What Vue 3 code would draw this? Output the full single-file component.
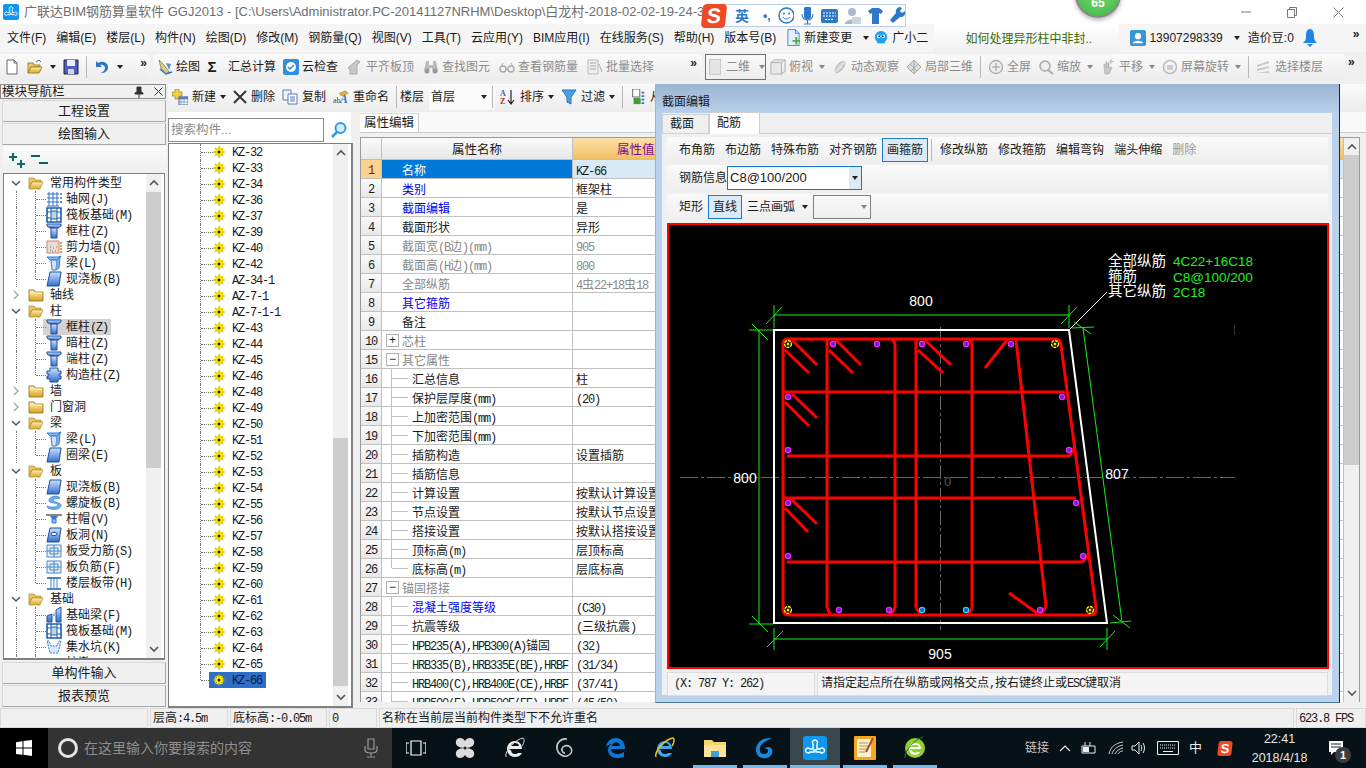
<script setup>
import { h } from 'vue';

// ascii goes in a squeezed mono so it keeps the half-width look of the original font
const Tx = (props) =>
  (props.s || '')
    .split(/([\x00-\x7f]+)/)
    .filter(Boolean)
    .map((p) => (/^[\x00-\x7f]/.test(p) ? h('span', { class: 'lat' }, p) : p));
Tx.props = ['s'];

const menus = ['文件(F)', '编辑(E)', '楼层(L)', '构件(N)', '绘图(D)', '修改(M)', '钢筋量(Q)', '视图(V)', '工具(T)', '云应用(Y)', 'BIM应用(I)', '在线服务(S)', '帮助(H)', '版本号(B)'];

const tools1 = [
  { ic: 'i-draw', t: '绘图' },
  { ic: 'i-sum', t: '汇总计算' },
  { ic: 'i-cloud', t: '云检查' },
  { ic: 'i-align', t: '平齐板顶', off: true },
  { ic: 'i-bino', t: '查找图元', off: true },
  { ic: 'i-glass', t: '查看钢筋量', off: true },
  { ic: 'i-batch', t: '批量选择', off: true },
];

const tools2 = [
  { ic: 'i-box', t: '俯视', arrow: true },
  { ic: 'i-orbit', t: '动态观察' },
  { ic: 'i-cube', t: '局部三维', sep: true },
  { ic: 'i-full', t: '全屏' },
  { ic: 'i-zoom', t: '缩放', arrow: true },
  { ic: 'i-hand', t: '平移', arrow: true },
  { ic: 'i-rot', t: '屏幕旋转', arrow: true, sep: true },
  { ic: 'i-floor', t: '选择楼层' },
];

const tree = [
  { t: '常用构件类型', open: true },
  { t: '轴网(J)', ic: 'n-grid' },
  { t: '筏板基础(M)', ic: 'n-raft' },
  { t: '框柱(Z)', ic: 'n-col' },
  { t: '剪力墙(Q)', ic: 'n-wall' },
  { t: '梁(L)', ic: 'n-beam' },
  { t: '现浇板(B)', ic: 'n-slab', last: true },
  { t: '轴线' },
  { t: '柱', open: true },
  { t: '框柱(Z)', ic: 'n-col', sel: true },
  { t: '暗柱(Z)', ic: 'n-col' },
  { t: '端柱(Z)', ic: 'n-col' },
  { t: '构造柱(Z)', ic: 'n-gz', last: true },
  { t: '墙' },
  { t: '门窗洞' },
  { t: '梁', open: true },
  { t: '梁(L)', ic: 'n-beam' },
  { t: '圈梁(E)', ic: 'n-slab', last: true },
  { t: '板', open: true },
  { t: '现浇板(B)', ic: 'n-slab' },
  { t: '螺旋板(B)', ic: 'n-spiral' },
  { t: '柱帽(V)', ic: 'n-cap' },
  { t: '板洞(N)', ic: 'n-hole' },
  { t: '板受力筋(S)', ic: 'n-force' },
  { t: '板负筋(F)', ic: 'n-force' },
  { t: '楼层板带(H)', ic: 'n-band', last: true },
  { t: '基础', open: true },
  { t: '基础梁(F)', ic: 'n-fbeam' },
  { t: '筏板基础(M)', ic: 'n-raft' },
  { t: '集水坑(K)', ic: 'n-pit' },
  { t: '柱墩(Y)', ic: 'n-cap' },
];
tree.forEach((r) => { r.child = !!r.ic; });

const parts = ['KZ-32', 'KZ-33', 'KZ-34', 'KZ-36', 'KZ-37', 'KZ-39', 'KZ-40', 'KZ-42', 'AZ-34-1', 'AZ-7-1', 'AZ-7-1-1', 'KZ-43', 'KZ-44', 'KZ-45', 'KZ-46', 'KZ-48', 'KZ-49', 'KZ-50', 'KZ-51', 'KZ-52', 'KZ-53', 'KZ-54', 'KZ-55', 'KZ-56', 'KZ-57', 'KZ-58', 'KZ-59', 'KZ-60', 'KZ-61', 'KZ-62', 'KZ-63', 'KZ-64', 'KZ-65', 'KZ-66'];

// kind: b blue, g grey; sub = nested under a group, box = + or - group head
const props = [
  { n: 1, name: '名称', val: 'KZ-66', sel: true },
  { n: 2, name: '类别', val: '框架柱', kind: 'b' },
  { n: 3, name: '截面编辑', val: '是', kind: 'b' },
  { n: 4, name: '截面形状', val: '异形' },
  { n: 5, name: '截面宽(B边)(mm)', val: '905', kind: 'g', vg: true },
  { n: 6, name: '截面高(H边)(mm)', val: '800', kind: 'g', vg: true },
  { n: 7, name: '全部纵筋', val: '4虫22+18虫18', kind: 'g', vg: true },
  { n: 8, name: '其它箍筋', val: '', kind: 'b' },
  { n: 9, name: '备注', val: '' },
  { n: 10, name: '芯柱', val: '', kind: 'g', box: '+' },
  { n: 15, name: '其它属性', val: '', kind: 'g', box: '−' },
  { n: 16, name: '汇总信息', val: '柱', sub: true },
  { n: 17, name: '保护层厚度(mm)', val: '(20)', sub: true },
  { n: 18, name: '上加密范围(mm)', val: '', sub: true },
  { n: 19, name: '下加密范围(mm)', val: '', sub: true },
  { n: 20, name: '插筋构造', val: '设置插筋', sub: true },
  { n: 21, name: '插筋信息', val: '', sub: true },
  { n: 22, name: '计算设置', val: '按默认计算设置', sub: true },
  { n: 23, name: '节点设置', val: '按默认节点设置', sub: true },
  { n: 24, name: '搭接设置', val: '按默认搭接设置', sub: true },
  { n: 25, name: '顶标高(m)', val: '层顶标高', sub: true },
  { n: 26, name: '底标高(m)', val: '层底标高', sub: true, end: true },
  { n: 27, name: '锚固搭接', val: '', kind: 'g', box: '−' },
  { n: 28, name: '混凝土强度等级', val: '(C30)', kind: 'b', sub: true },
  { n: 29, name: '抗震等级', val: '(三级抗震)', sub: true },
  { n: 30, name: 'HPB235(A),HPB300(A)锚固', val: '(32)', sub: true },
  { n: 31, name: 'HRB335(B),HRB335E(BE),HRBF', val: '(31/34)', sub: true },
  { n: 32, name: 'HRB400(C),HRB400E(CE),HRBF', val: '(37/41)', sub: true },
  { n: 33, name: 'HRB500(E),HRB500E(EE),HRBF', val: '(45/50)', sub: true },
];

const barTools = ['布角筋', '布边筋', '特殊布筋', '对齐钢筋'];
const barEdit = ['修改纵筋', '修改箍筋', '编辑弯钩', '端头伸缩'];

// section drawing, in screen coordinates
const greens = [
  [774, 315, 1069, 315], [774, 305, 774, 328], [1069, 305, 1069, 328], [766, 324, 782, 307], [1061, 324, 1077, 307],
  [759, 330, 759, 624], [749, 330, 773, 330], [749, 624, 773, 624], [752, 324, 768, 340], [752, 616, 768, 632],
  [774, 639, 1107, 639], [774, 628, 774, 650], [1107, 628, 1107, 650], [767, 647, 783, 631], [1100, 647, 1115, 631],
  [1083, 328, 1122, 622], [1072, 328, 1094, 327], [1074, 322, 1091, 334], [1110, 623, 1131, 621], [1113, 615, 1130, 628],
];
const reds = [
  [827, 339, 827, 608], [827, 608, 831, 615],
  [895, 343, 895, 608], [892, 339, 895, 343], [895, 608, 890, 615],
  [916, 339, 916, 608], [916, 608, 921, 615],
  [972, 343, 972, 608], [969, 339, 972, 343], [972, 608, 968, 615],
  [1016, 340, 1046, 606], [1046, 606, 1041, 615],
  [783, 392, 1065, 392],
  [787, 456, 1070, 456], [1070, 456, 1074, 448],
  [783, 498, 1076, 498],
  [787, 562, 1083, 562], [1083, 562, 1089, 553],
  [785, 350, 809, 373], [792, 340, 817, 365],
  [829, 350, 853, 373], [836, 340, 861, 365],
  [918, 350, 943, 373], [925, 340, 951, 365],
  [1007, 340, 985, 368],
  [785, 402, 809, 426], [792, 394, 817, 418],
  [785, 508, 808, 532], [790, 498, 817, 524],
  [1009, 593, 1037, 613],
];
const yellows = [[788, 344], [1055, 344], [788, 610], [1090, 610]];
const pinks = [[833, 344], [877, 344], [922, 344], [966, 344], [1011, 344], [788, 397], [1062, 397], [788, 450], [1069, 450], [788, 503], [1076, 503], [788, 556], [1083, 556], [839, 610], [889, 610], [1040, 610]];
const cyans = [[922, 610], [966, 610]];

const taskApps = [
  { ic: 't-fan' }, { ic: 't-ie1' }, { ic: 't-swirl' }, { ic: 't-edge' }, { ic: 't-ie' },
  { ic: 't-folder', run: true }, { ic: 't-g', run: true }, { ic: 't-app', run: true, active: true },
  { ic: 't-note', run: true }, { ic: 't-green', run: true },
];
</script>

<template>
  <div class="app">
    <svg class="defs" width="0" height="0">
      <defs>
        <linearGradient id="gFold" x1="0" y1="0" x2="0" y2="1"><stop offset="0" stop-color="#fff0b0" /><stop offset="1" stop-color="#d9a520" /></linearGradient>
        <linearGradient id="gBlue" x1="0" y1="0" x2="0" y2="1"><stop offset="0" stop-color="#cfe3fb" /><stop offset="1" stop-color="#2f6fd0" /></linearGradient>
        <symbol id="f-open" viewBox="0 0 16 16"><path d="M1 3h5l1 2h6v2H4L1 13z" fill="#e8c868" stroke="#a8842c" stroke-width=".7" /><path d="M4 7h11l-3 7H1z" fill="url(#gFold)" stroke="#b08a2c" stroke-width=".7" /></symbol>
        <symbol id="f-shut" viewBox="0 0 16 16"><path d="M1 3h5l1 2h8v9H1z" fill="url(#gFold)" stroke="#8a6d1f" stroke-width=".8" /><path d="M2 6h12" stroke="#fff6cc" /></symbol>
        <symbol id="n-grid" viewBox="0 0 16 16"><path d="M1 3h12M1 7h12M1 11h12M1 15h12M3 1v14M7 1v14M11 1v14" stroke="#2f6fd0" fill="none" /><circle cx="15" cy="3" r="1" fill="#2f6fd0" /><circle cx="15" cy="7" r="1" fill="#2f6fd0" /><circle cx="15" cy="11" r="1" fill="#2f6fd0" /></symbol>
        <symbol id="n-raft" viewBox="0 0 16 16"><path d="M1 1h14v14H1z" fill="#fff" stroke="#1d5aa8" stroke-width="1.6" /><path d="M5 4h6v8H5z" fill="#bcd4ee" stroke="#1d5aa8" /><path d="M1 5h4M1 11h4M11 5h4M11 11h4M5 1v3M11 1v3M5 12v3M11 12v3" stroke="#1d5aa8" /></symbol>
        <symbol id="n-col" viewBox="0 0 16 16"><path d="M1 1h14v2l-3 2H4L1 3z" fill="url(#gBlue)" stroke="#1d4fa0" /><path d="M5 5h6v10H5z" fill="url(#gBlue)" stroke="#1d4fa0" /></symbol>
        <symbol id="n-wall" viewBox="0 0 16 16"><path d="M1 2h12v12H1z" fill="#eadad2" stroke="#c48a70" /><path d="M4 11h1M7 9h1M9 12h1M6 12h1M10 8h1M4 8h1" stroke="#777" /><path d="M15 3v11" stroke="#e27a1d" stroke-dasharray="2 1" stroke-width="1.5" /></symbol>
        <symbol id="n-beam" viewBox="0 0 16 16"><path d="M1 2h11l3-1-3 4H4z" fill="#8fbdf0" stroke="#2f7ad0" /><path d="M5 5h6l-1 10H6z" fill="#cfe3fb" stroke="#2f7ad0" /><path d="M11 5l3-3-1 11-3 2" fill="#7fb0ea" stroke="#2f7ad0" /></symbol>
        <symbol id="n-slab" viewBox="0 0 16 16"><path d="M4 1h11l-2 14H1z" fill="url(#gBlue)" stroke="#1d4fa0" /></symbol>
        <symbol id="n-gz" viewBox="0 0 16 16"><path d="M4 1h8v3h3v3h-2v2h2v3h-3v3H4v-3H1V9h2V7H1V4h3z" fill="url(#gBlue)" stroke="#1d4fa0" /></symbol>
        <symbol id="n-spiral" viewBox="0 0 16 16"><path d="M14 3C11-1 2 2 3 6c1 3 9 1 9 4 0 2-8 3-11 1 0 4 12 5 14 0 1-4-8-3-8-6 1-2 5-1 7-2z" fill="#6fb0ec" stroke="#2f7ad0" stroke-width=".7" /></symbol>
        <symbol id="n-cap" viewBox="0 0 16 16"><path d="M0 3h16v2H0z" fill="#888" /><path d="M4 5h8l-2 3H6z" fill="#3a7ad0" /><path d="M6 8h4v4H6z" fill="#8fbdf0" stroke="#2f7ad0" /></symbol>
        <symbol id="n-hole" viewBox="0 0 16 16"><path d="M4 1h11l-2 14H1z" fill="url(#gBlue)" stroke="#1d4fa0" /><ellipse cx="8" cy="7" rx="3" ry="1.6" fill="#fff" stroke="#1d4fa0" /></symbol>
        <symbol id="n-force" viewBox="0 0 16 16"><path d="M1 2h14v12H1z" fill="#e4eefa" stroke="#4a86c8" /><path d="M1 8h14M8 2v12" stroke="#4a86c8" /><path d="M4 5h8v6H4z" fill="none" stroke="#4a86c8" /></symbol>
        <symbol id="n-band" viewBox="0 0 16 16"><path d="M1 3h14M1 14h14" stroke="#1d5aa8" stroke-width="1.4" /><path d="M5 3v11M11 3v11M8 3v11" stroke="#4a86c8" /></symbol>
        <symbol id="n-fbeam" viewBox="0 0 16 16"><path d="M1 15V9l5-2v8zM10 15V3l5-3v15z" fill="url(#gBlue)" stroke="#1d4fa0" /><path d="M6 8l4-4v5H6z" fill="#8fbdf0" /></symbol>
        <symbol id="n-pit" viewBox="0 0 16 16"><path d="M1 2h2l2 5h6l2-5h2l-3 12H4z" fill="#dbe9fa" stroke="#2f7ad0" stroke-dasharray="2 1" /></symbol>
        <symbol id="n-gear" viewBox="0 0 12 12"><circle cx="6" cy="6" r="4.6" fill="#ffee00" /><path d="M6 0v12M0 6h12M1.8 1.8l8.4 8.4M10.2 1.8l-8.4 8.4" stroke="#b9a000" /><circle cx="6" cy="6" r="3" fill="#ffee00" /><circle cx="6" cy="6" r="1.5" fill="#222" /></symbol>
        <symbol id="i-new" viewBox="0 0 16 16"><path d="M3 1h7l3 3v11H3z" fill="#fff" stroke="#667" /><path d="M10 1v3h3" fill="none" stroke="#667" /></symbol>
        <symbol id="i-open" viewBox="0 0 16 16"><path d="M1 4h5l1 2h6v2H4L1 14z" fill="#e8c868" stroke="#a8842c" /><path d="M4 8h11l-3 6H1z" fill="url(#gFold)" stroke="#a8842c" /><path d="M9 3l3-2 2 2" fill="none" stroke="#2f6fd0" /></symbol>
        <symbol id="i-save" viewBox="0 0 16 16"><path d="M1 1h14v14H1z" fill="#4a5ec0" stroke="#223" /><path d="M4 1h8v6H4z" fill="#e8eef8" /><path d="M5 10h6v5H5z" fill="#cfd8e8" /></symbol>
        <symbol id="i-undo" viewBox="0 0 16 16"><path d="M2 2v6h6L6 6c3-1 5 1 5 3s-2 4-4 5c4 0 7-2 7-6S9 1 4 4z" fill="#2f73c8" /></symbol>
        <symbol id="i-draw" viewBox="0 0 16 16"><path d="M2 1l5 5 5 7-3 2-5-6z" fill="#e8d070" stroke="#666" stroke-width=".7" /><path d="M9 4l5 1-2 6" fill="#5a8fd8" /><path d="M3 10l6 5 6-2" stroke="#2f6fd0" fill="none" stroke-width="1.4" /></symbol>
        <symbol id="i-cloud" viewBox="0 0 16 16"><rect x="0" y="0" width="16" height="16" rx="2" fill="#2f8fdc" /><circle cx="8" cy="8" r="5" fill="#fff" /><path d="M5 8l2 2 4-4" fill="none" stroke="#2f8fdc" stroke-width="1.5" /></symbol>
        <symbol id="i-align" viewBox="0 0 16 16"><path d="M1 9l9-8 3 2-3 3v9H3V10z" fill="#c8c8c8" stroke="#aaa" /></symbol>
        <symbol id="i-bino" viewBox="0 0 16 16"><path d="M3 2h3v4h4V2h3l2 10h-5l-1-3H7l-1 3H1z" fill="#bbb" /><circle cx="4" cy="12" r="2.5" fill="#999" /><circle cx="12" cy="12" r="2.5" fill="#999" /></symbol>
        <symbol id="i-glass" viewBox="0 0 16 16"><circle cx="4" cy="10" r="3" fill="none" stroke="#aaa" stroke-width="1.4" /><circle cx="12" cy="10" r="3" fill="none" stroke="#aaa" stroke-width="1.4" /><path d="M7 10h2M2 8l2-4M14 8l-2-4" stroke="#aaa" /></symbol>
        <symbol id="i-batch" viewBox="0 0 16 16"><path d="M1 1h10v14H1z" fill="#eee" stroke="#bbb" /><path d="M3 4h6M3 7h6M3 10h6M12 5l3 8" stroke="#aaa" /></symbol>
        <symbol id="i-box" viewBox="0 0 18 18"><path d="M1 4h12v13H1zM1 4l4-3h12l-4 3M13 17l4-3V1" fill="#e8e8e8" stroke="#aaa" /></symbol>
        <symbol id="i-orbit" viewBox="0 0 16 16"><ellipse cx="8" cy="8" rx="3.5" ry="7.5" transform="rotate(40 8 8)" fill="#bbb" /><ellipse cx="8" cy="8" rx="2" ry="7.5" transform="rotate(40 8 8)" fill="#ddd" /></symbol>
        <symbol id="i-cube" viewBox="0 0 16 16"><path d="M1 8l7-7 7 7-7 7z" fill="#ddd" stroke="#aaa" /><path d="M4 5l7 7M8 1v14M12 5l-7 7" stroke="#aaa" /></symbol>
        <symbol id="i-full" viewBox="0 0 16 16"><circle cx="8" cy="8" r="6.5" fill="#eee" stroke="#aaa" stroke-width="1.3" /><path d="M8 4v8M4 8h8" stroke="#999" /></symbol>
        <symbol id="i-zoom" viewBox="0 0 16 16"><circle cx="7" cy="7" r="5" fill="#eee" stroke="#aaa" stroke-width="1.6" /><path d="M10 11l5 4" stroke="#aaa" stroke-width="2" /></symbol>
        <symbol id="i-hand" viewBox="0 0 16 16"><path d="M4 8V5h1v3h1V3h1v5h1V4h1v5l2-1 1 1-3 6H5z" fill="#c8c8c8" stroke="#aaa" stroke-width=".6" /><path d="M11 0v5M9 2.500h5" stroke="#bbb" /></symbol>
        <symbol id="i-rot" viewBox="0 0 16 16"><circle cx="8" cy="8" r="6.500" fill="#f4f4f4" stroke="#bbb" stroke-width="1.500" /><path d="M5 6h6v5H5z" fill="#ccc" /></symbol>
        <symbol id="i-floor" viewBox="0 0 16 16"><path d="M1 6l12-4v2L1 8zM1 10l12-3v2L1 12zM1 14l12-2v2H1z" fill="#c8c8c8" /></symbol>
        <symbol id="i-add" viewBox="0 0 16 16"><path d="M3 0h4v3h3v4H7v3H3V7H0V3h3z" fill="#f0d050" stroke="#a08020" stroke-width=".7" /><path d="M7 8h9v8H7z" fill="#fff" stroke="#4a70b0" /><path d="M7 8h9v2H7zM9 10v6M12 10v6M7 13h9" fill="#5a88c8" stroke="#4a70b0" stroke-width=".6" /></symbol>
        <symbol id="i-copy" viewBox="0 0 16 16"><path d="M1 1h8v10H1z" fill="#eef3fa" stroke="#5a7fb0" /><path d="M6 5h9v10H6z" fill="#fff" stroke="#5a7fb0" /><path d="M8 8h5M8 10h5M8 12h5" stroke="#5a7fb0" /></symbol>
        <symbol id="i-rename" viewBox="0 0 18 16"><path d="M7 4l7-3 3 3-7 3z" fill="#e8b040" stroke="#8a6d1f" stroke-width=".6" /><text x="0" y="15" font-size="9" font-family="Liberation Serif" fill="#444">ab</text><text x="8" y="15" font-size="13" font-weight="700" font-style="italic" font-family="Liberation Serif" fill="#2f6fd0">A</text></symbol>
        <symbol id="i-sort" viewBox="0 0 16 16"><text x="0" y="7" font-size="8" font-weight="700" font-family="Liberation Serif" fill="#2f5fc0">A</text><text x="0" y="15" font-size="8" font-weight="700" font-family="Liberation Serif" fill="#c02828">Z</text><path d="M11 1v13M8 11l3 4 3-4" fill="none" stroke="#222" stroke-width="1.2" /></symbol>
        <symbol id="i-filter" viewBox="0 0 16 16"><path d="M1 1h14L10 8v7l-4-2V8z" fill="#4aa0e8" stroke="#2a70b8" /></symbol>
        <symbol id="i-from" viewBox="0 0 16 18"><path d="M2 0h8v9H2z" fill="#fff" stroke="#556" /><path d="M3 10h8v7H3z" fill="#4a9a3a" /><path d="M12 4h3M12 8h3M12 12h3M12 16h3" stroke="#2f6fd0" stroke-width="2" /></symbol>
        <symbol id="i-change" viewBox="0 0 16 20"><path d="M2 1h8l4 4v13H2z" fill="#e4eefc" stroke="#4a86c8" /><path d="M10 1v4h4" fill="none" stroke="#4a86c8" /><path d="M7 12h3v-3h2v3h3v2h-3v3h-2v-3H7z" fill="#4ab030" /></symbol>
        <symbol id="i-buddy" viewBox="0 0 18 18"><circle cx="9" cy="8" r="7" fill="#1da1f2" /><circle cx="6.500" cy="7" r="2" fill="#fff" /><circle cx="11.500" cy="7" r="2" fill="#fff" /><circle cx="7" cy="7" r="1" fill="#123" /><circle cx="11" cy="7" r="1" fill="#123" /><path d="M4 15l2-3h6l2 3" fill="#1da1f2" /></symbol>
        <symbol id="i-user" viewBox="0 0 18 18"><rect width="18" height="18" rx="2" fill="#3a95d8" /><circle cx="9" cy="7" r="3.500" fill="#fff" /><path d="M3 15c1-4 11-4 12 0z" fill="#fff" /></symbol>
        <symbol id="i-bell" viewBox="0 0 14 20"><path d="M7 1c3 0 4 3 4 7s1 5 3 7H0c2-2 3-3 3-7s1-7 4-7z" fill="#1f86e8" /><path d="M4 16h6l-3 3z" fill="#1f86e8" /></symbol>
        <symbol id="t-win" viewBox="0 0 16 16"><path d="M0 2.200 6.500 1.300v6.300H0zM7.500 1.100 16 0v7.600H7.500zM0 8.500h6.500v6.300L0 13.900zM7.500 8.500H16V16l-8.500-1.200z" fill="#fff" /></symbol>
        <symbol id="t-fan" viewBox="0 0 24 24"><path d="M12 12C5 12 2 9 3 5s7-4 9 0c2-4 8-4 9 0s-2 7-9 7c7 0 10 3 9 7s-7 4-9 0c-2 4-8 4-9 0s2-7 9-7z" fill="#dcdcdc" /><circle cx="12" cy="12" r="1.500" fill="#222" /></symbol>
        <symbol id="t-ie1" viewBox="0 0 24 24"><path d="M5 13h14c0-5-3-8-7-8s-8 3-8 8 4 8 8 8c3 0 5-1 7-4h-4c-1 1-2 1-3 1-3 0-4-2-4-4zm3-3c0-2 2-3 4-3s4 1 4 3z" fill="#eee" /><path d="M3 21C1 15 13 3 20 2c2 1 1 5-1 8" fill="none" stroke="#ddd" /></symbol>
        <symbol id="t-swirl" viewBox="0 0 24 24"><path d="M14 3C7 2 3 8 4 13s6 8 10 7 6-5 4-8-6-3-8-1-1 6 2 6" fill="none" stroke="#c8c8c8" stroke-width="1.600" /></symbol>
        <symbol id="t-edge" viewBox="0 0 24 24"><path d="M3 11C4 5 8 2 13 2c6 0 9 5 9 11H8c0 5 7 7 13 3v5c-8 3-16 0-16-7 0-3 2-5 4-6-2 0-4 1-6 3zm6-1h8c0-5-7-5-8 0z" fill="#0a78d7" /></symbol>
        <symbol id="t-ie" viewBox="0 0 24 24"><path d="M5 13h14c0-5-3-8-7-8s-8 3-8 8 4 8 8 8c3 0 5-1 7-4h-4c-1 1-2 1-3 1-3 0-4-2-4-4zm3-3c0-2 2-3 4-3s4 1 4 3z" fill="#3ea8ec" /><path d="M3 21C1 15 13 3 20 2c2 1 1 5-1 8" fill="none" stroke="#f0c020" stroke-width="1.500" /></symbol>
        <symbol id="t-folder" viewBox="0 0 24 24"><path d="M1 4h8l2 2h12v15H1z" fill="#f6d66e" /><path d="M1 9h22v12H1z" fill="#fbe39a" /><path d="M8 15h8v6H8z" fill="#3fa0d8" /></symbol>
        <symbol id="t-g" viewBox="0 0 24 24"><path d="M19 2C9 1 3 7 3 14c0 6 5 9 10 8 6-1 8-7 5-10-2-2-6-1-7 1 2-1 4 0 4 2s-2 3-4 3c-3 0-5-2-4-6 1-5 6-7 12-10z" fill="#1688dd" /></symbol>
        <symbol id="t-app" viewBox="0 0 24 24"><rect width="24" height="24" rx="3" fill="#0f96ee" /><path d="M12 4a2.500 2.500 0 0 1 2 4v5h3a2.500 2.500 0 1 1 0 3h-4v-2h-2v2H7a2.500 2.500 0 1 1 0-3h3V8a2.500 2.500 0 0 1 2-4z" fill="none" stroke="#fff" stroke-width="1.400" /></symbol>
        <symbol id="t-note" viewBox="0 0 24 24"><rect x="1" y="0" width="22" height="24" rx="1" fill="#f6a623" /><path d="M4 3h14v18H4z" fill="#fff3cf" /><path d="M6 7h9M6 10h9M6 13h9M6 16h6" stroke="#b08a50" /><path d="M20 2l-7 14" stroke="#b04818" stroke-width="2" /></symbol>
        <symbol id="t-green" viewBox="0 0 24 24"><circle cx="12" cy="12" r="10" fill="#8fd030" /><path d="M6 13h12c0-4-2-6-6-6s-6 3-6 6 3 6 6 6c2 0 4-1 5-3h-3c-1 1-4 1-5-1zm2-2c0-3 7-3 8 0z" fill="#fff" /><path d="M2 22C1 15 12 3 20 1" fill="none" stroke="#208030" /></symbol>
      </defs>
    </svg>

    <header class="title">
      <svg class="titleLogo"><use href="#t-app" /></svg>
      <span class="titleText">广联达BIM钢筋算量软件 GGJ2013 - [C:\Users\Administrator.PC-20141127NRHM\Desktop\白龙村-2018-02-02-19-24-35</span>
      <div class="winBtns">
        <svg width="10" height="10"><path d="M0 5h10" stroke="#777" /></svg>
        <svg width="10" height="11"><path d="M.5 2.500h7v8h-7zM2.500 2.500v-2h7v8h-2" fill="none" stroke="#777" /></svg>
        <svg width="11" height="11"><path d="M.5.500l10 10M10.500.500l-10 10" stroke="#777" /></svg>
      </div>
    </header>

    <nav class="menu">
      <span v-for="m in menus" :key="m">{{ m }}</span>
      <span class="menuIc"><svg class="ic16h"><use href="#i-change" /></svg>新建变更<i class="drop" /></span>
      <span class="menuIc buddy"><svg class="ic16"><use href="#i-buddy" /></svg>广小二</span>
      <div class="news">如何处理异形柱中非封..</div>
      <span class="menuIc acct"><svg class="ic16"><use href="#i-user" /></svg>13907298339<i class="drop" /></span>
      <span class="bean">造价豆:0</span>
      <svg class="bell"><use href="#i-bell" /></svg>
      <span class="more">»</span>
    </nav>

    <div class="tools">
      <div class="strip stripA">
        <svg class="ic16"><use href="#i-new" /></svg>
        <svg class="ic16"><use href="#i-open" /></svg><i class="drop" />
        <svg class="ic16"><use href="#i-save" /></svg>
        <b class="sep" />
        <svg class="ic16"><use href="#i-undo" /></svg><i class="drop" />
        <span class="more">»</span>
      </div>
      <div class="strip stripB">
        <span v-for="x in tools1" :key="x.t" class="tool" :class="{ off: x.off, first: x.ic === 'i-draw', sumTool: x.ic === 'i-sum' }">
          <em v-if="x.ic === 'i-sum'" class="sigma">Σ</em>
          <svg v-else class="ic16"><use :href="'#' + x.ic" /></svg>{{ x.t }}
        </span>
        <span class="more">»</span>
      </div>
      <div class="strip stripC">
        <div class="view2d"><i class="swatch" />二维<i class="drop grey" /></div>
        <template v-for="x in tools2" :key="x.t">
          <span class="tool off"><svg class="ic16"><use :href="'#' + x.ic" /></svg>{{ x.t }}<i v-if="x.arrow" class="drop grey" /></span>
          <b v-if="x.sep" class="sep" />
        </template>
      </div>
      <span class="more farMore">»</span>
    </div>

    <div class="work">
      <aside class="nav">
        <div class="navHead">
          <span>模块导航栏</span>
          <svg width="10" height="12"><path d="M3 1h4v5l2 1v1H1V7l2-1zM5 8v4" fill="#333" stroke="#333" /></svg>
          <svg width="9" height="9"><path d="M.5.500l8 8M8.500.500l-8 8" stroke="#333" /></svg>
        </div>
        <button class="navBtn">工程设置</button>
        <button class="navBtn">绘图输入</button>
        <div class="plusMinus">
          <svg width="18" height="16"><path d="M5 1v8M1 5h8M13 8v8M9 12h8" stroke="#0b6b6b" stroke-width="2" fill="none" /></svg>
          <svg width="18" height="16"><path d="M0 4h9M8 11h9" stroke="#0b5f5f" stroke-width="2" /></svg>
        </div>
        <div class="treeBox">
          <div class="treeRows">
            <div v-for="(r, i) in tree" :key="i" class="tRow" :class="{ child: r.child, last: r.last }">
              <template v-if="r.child">
                <i class="hl" />
                <span class="tLabel" :class="{ picked: r.sel }"><svg class="ic16"><use :href="'#' + r.ic" /></svg><span class="tTxt"><Tx :s="r.t" /></span></span>
              </template>
              <template v-else>
                <svg class="chev" width="10" height="10"><path :d="r.open ? 'M1 3l4 4 4-4' : 'M3 1l4 4-4 4'" fill="none" :stroke="r.open ? '#555' : '#aaa'" stroke-width="1.500" /></svg>
                <svg class="ic16"><use :href="r.open ? '#f-open' : '#f-shut'" /></svg>
                <span class="tHead">{{ r.t }}</span>
              </template>
            </div>
          </div>
          <div class="sb">
            <svg class="arrow" width="12" height="12"><path d="M2 8l4-4 4 4" fill="none" stroke="#555" stroke-width="1.600" /></svg>
            <div class="thumb navThumb" />
            <svg class="arrow bottom" width="12" height="12"><path d="M2 4l4 4 4-4" fill="none" stroke="#555" stroke-width="1.600" /></svg>
          </div>
        </div>
        <button class="navBtn">单构件输入</button>
        <button class="navBtn">报表预览</button>
      </aside>

      <section class="center">
        <div class="listBar">
          <span class="tool"><svg class="ic16"><use href="#i-add" /></svg>新建<i class="drop" /></span>
          <span class="tool"><svg width="14" height="14"><path d="M1 1l12 12M13 1L1 13" stroke="#333" stroke-width="2" /></svg>删除</span>
          <span class="tool"><svg class="ic16"><use href="#i-copy" /></svg>复制</span>
          <span class="tool"><svg class="ic16"><use href="#i-rename" /></svg>重命名</span>
          <b class="sep" />
          <span class="tool floorLabel">楼层</span>
          <div class="floorCombo">首层<i class="drop" /></div>
          <b class="sep" />
          <span class="tool"><svg class="ic16"><use href="#i-sort" /></svg>排序<i class="drop" /></span>
          <span class="tool"><svg class="ic16"><use href="#i-filter" /></svg>过滤<i class="drop" /></span>
          <b class="sep" />
          <span class="tool"><svg class="ic16"><use href="#i-from" /></svg>从其它楼层复制构件</span>
        </div>
        <div class="panes">
          <div class="parts">
            <div class="search">
              <div class="searchBox">搜索构件...</div>
              <svg width="18" height="18"><circle cx="10.500" cy="7" r="5" fill="#d8ecfb" stroke="#2f9be8" stroke-width="2" /><path d="M7 11l-5 5" stroke="#2f9be8" stroke-width="2.500" /></svg>
            </div>
            <div class="partList">
              <div class="partRows">
                <div v-for="(p, i) in parts" :key="p" class="pRow" :class="{ lastP: i === parts.length - 1 }">
                  <i class="hl" />
                  <span class="pLabel" :class="{ cur: i === parts.length - 1 }"><svg class="gear"><use href="#n-gear" /></svg><span class="pName"><Tx :s="p" /></span></span>
                </div>
              </div>
              <div class="sb">
                <svg class="arrow" width="12" height="12"><path d="M2 8l4-4 4 4" fill="none" stroke="#555" stroke-width="1.600" /></svg>
                <div class="thumb partThumb" />
                <svg class="arrow bottom" width="12" height="12"><path d="M2 4l4 4 4-4" fill="none" stroke="#555" stroke-width="1.600" /></svg>
              </div>
            </div>
          </div>

          <div class="propPane">
            <div class="propTabs"><span class="propTab">属性编辑</span></div>
            <div class="propBody">
              <div class="propTable">
                <div class="pHead">
                  <span class="cNo" />
                  <span class="cName">属性名称</span>
                  <span class="cVal">属性值</span>
                </div>
                <div v-for="r in props" :key="r.n" class="pLine" :class="{ sel: r.sel }">
                  <span class="cNo"><Tx :s="String(r.n)" /></span>
                  <span class="cName" :class="[r.kind, { sub: r.sub, end: r.end, hasBox: r.box }]">
                    <i v-if="r.box" class="pm">{{ r.box }}</i>
                    <Tx :s="r.name" />
                  </span>
                  <span class="cVal" :class="{ vg: r.vg }"><Tx :s="r.val" /></span>
                </div>
              </div>
              <div class="sb propSb">
                <svg class="arrow" width="12" height="12"><path d="M2 8l4-4 4 4" fill="none" stroke="#555" stroke-width="1.600" /></svg>
                <div class="thumb propThumb" />
                <svg class="arrow bottom" width="12" height="12"><path d="M2 4l4 4 4-4" fill="none" stroke="#555" stroke-width="1.600" /></svg>
              </div>
            </div>
          </div>
        </div>
      </section>
    </div>

    <footer class="status">
      <span class="st w1" />
      <span class="st w2"><Tx s="层高:4.5m" /></span>
      <span class="st w3"><Tx s="底标高:-0.05m" /></span>
      <span class="st w4"><Tx s="0" /></span>
      <span class="st w5">名称在当前层当前构件类型下不允许重名</span>
      <span class="st w6"><Tx s="623.8 FPS" /></span>
    </footer>

    <footer class="taskbar">
      <div class="startBtn"><svg width="16" height="16"><use href="#t-win" /></svg></div>
      <div class="cortana">
        <i class="ring" />
        <span>在这里输入你要搜索的内容</span>
        <svg class="mic" width="14" height="20"><path d="M4 1h6v10H4zM1 8v4c0 2 2 3 6 3s6-1 6-3V8M7 15v3M3 19h8" fill="none" stroke="#999" stroke-width="1.200" /></svg>
      </div>
      <div class="taskView"><svg width="20" height="16"><path d="M5 1h10v14H5zM3 3H0v10h3M17 3h3v10h-3" fill="none" stroke="#fff" stroke-width="1.200" /></svg></div>
      <div v-for="a in taskApps" :key="a.ic" class="tApp" :class="{ run: a.run, active: a.active }"><svg width="24" height="24"><use :href="'#' + a.ic" /></svg></div>
      <div class="tray">
        <span class="link">链接</span>
        <svg width="12" height="8"><path d="M1 7l5-5 5 5" fill="none" stroke="#eee" stroke-width="1.200" /></svg>
        <svg width="17" height="14"><path d="M1 5h13v7H1zM4 1v4M9 1v4" fill="none" stroke="#eee" /><path d="M2 6h6v5H2z" fill="#eee" /></svg>
        <svg width="16" height="14"><path d="M1 13C2 7 7 2 15 1M4 13c1-4 5-8 11-9M7 13c1-3 4-5 8-6M10 13c1-2 3-3 5-3" fill="none" stroke="#ccc" /></svg>
        <svg class="volIc" width="16" height="14"><path d="M1 5h3l4-4v12L4 9H1zM10 4c1 2 1 4 0 6M12 2c2 3 2 7 0 10" fill="none" stroke="#eee" /></svg>
        <svg width="22" height="14"><path d="M.5.500h21v13H.5z" fill="none" stroke="#eee" /><path d="M3 4h16M3 7h16" stroke="#eee" stroke-dasharray="1 1" /><path d="M6 10.500h10" stroke="#eee" /></svg>
        <span class="ime">中</span>
        <span class="sogouMini">S</span>
        <div class="clock"><span>22:41</span><span>2018/4/18</span></div>
        <div class="notice">
          <svg width="16" height="16"><path d="M1 1h14v11H6l-3 3v-3H1z" fill="#fff" /><path d="M3 4h10M3 7h10" stroke="#222" /></svg>
          <span class="badge">1</span>
        </div>
      </div>
    </footer>

    <div class="ball"><span>65</span></div>

    <div class="imeBar">
      <span class="sLogo">S</span>
      <span class="ying">英</span>
      <span class="dot">•,</span>
      <svg width="17" height="17"><circle cx="8.500" cy="8.500" r="7.500" fill="#fff" stroke="#2e78c8" stroke-width="1.500" /><circle cx="6" cy="6.500" r="1" fill="#2e78c8" /><circle cx="11" cy="6.500" r="1" fill="#2e78c8" /><path d="M5 10c1 2.500 6 2.500 7 0" fill="none" stroke="#2e78c8" /></svg>
      <svg width="13" height="19"><path d="M4 1h5a1 1 0 0 1 1 1v8a3 3 0 0 1-7 0V2z" fill="#2e78c8" /><path d="M1 8c0 8 11 8 11 0M6.500 14v4M3 18h7" fill="none" stroke="#2e78c8" stroke-width="1.200" /></svg>
      <svg width="17" height="14"><rect width="17" height="14" rx="2" fill="#2e78c8" /><path d="M2 4h13M2 7h13M4 10.500h9" stroke="#fff" stroke-dasharray="2 1" /></svg>
      <svg width="16" height="18"><circle cx="7" cy="5" r="4" fill="#a8bccf" /><path d="M0 17c0-6 14-6 14 0z" fill="#a8bccf" /><rect x="7" y="10" width="9" height="7" fill="#c8d4e0" /></svg>
      <svg width="15" height="16"><path d="M4 0h7l4 3-2 3-2-1v11H4V5L2 6 0 3z" fill="#2e78c8" /></svg>
      <svg width="15" height="17"><path d="M10 0a4.500 4.500 0 0 0-4 6L0 13l3 3 7-6a4.500 4.500 0 0 0 5-6l-3 2-2-2 2-3z" fill="#2e78c8" /></svg>
    </div>

    <div class="dialog">
      <div class="dlgTitle">截面编辑</div>
      <div class="dlgClient">
        <div class="dlgTabs">
          <span class="dTab">截面</span>
          <span class="dTab on">配筋</span>
        </div>
        <div class="dlgBody">
          <div class="dBar">
            <span v-for="t in barTools" :key="t" class="dBtn">{{ t }}</span>
            <span class="dBtn chosen">画箍筋</span>
            <b class="sep" />
            <span v-for="t in barEdit" :key="t" class="dBtn">{{ t }}</span>
            <span class="dBtn dim">删除</span>
          </div>
          <div class="dBar infoBar">
            <span class="dBtn">钢筋信息</span>
            <div class="rebarCombo"><span>C8@100/200</span><em><i class="drop" /></em></div>
          </div>
          <div class="dBar">
            <span class="dBtn">矩形</span>
            <span class="dBtn chosen">直线</span>
            <span class="dBtn">三点画弧</span><i class="drop arcDrop" />
            <div class="smallCombo"><i class="drop grey" /></div>
          </div>
          <svg class="canvas" viewBox="667 223 662 446" width="662" height="446">
            <rect x="667" y="223" width="662" height="446" fill="#000" />
            <path d="M680 477.500H1235" stroke="#666" stroke-dasharray="18 3 3 3" />
            <path d="M940.500 327V630" stroke="#666" stroke-dasharray="14 3 3 3" />
            <path d="M1234.500 325v10" stroke="#333" />
            <text x="944" y="486" class="cZero">0</text>
            <path d="M774 330H1069L1107 623H774Z" fill="none" stroke="#fff" stroke-width="2" />
            <path d="M1069 330L1107 292" stroke="#fff" />
            <line v-for="(l, i) in greens" :key="'g' + i" :x1="l[0]" :y1="l[1]" :x2="l[2]" :y2="l[3]" stroke="#14f014" />
            <path d="M788 339H1056Q1060 339 1061 345L1096 608Q1097 615 1090 615H789Q783 615 783 609V344Q783 339 788 339Z" fill="none" stroke="#f00" stroke-width="3" />
            <line v-for="(l, i) in reds" :key="'r' + i" :x1="l[0]" :y1="l[1]" :x2="l[2]" :y2="l[3]" stroke="#f00" stroke-width="3" />
            <g v-for="(n, i) in pinks" :key="'p' + i">
              <circle :cx="n[0]" :cy="n[1]" r="2.600" fill="#5a2ad0" stroke="#ff20ff" stroke-width="1.200" />
            </g>
            <g v-for="(n, i) in cyans" :key="'c' + i">
              <circle :cx="n[0]" :cy="n[1]" r="2.600" fill="#3050d0" stroke="#20e0f0" stroke-width="1.200" />
            </g>
            <g v-for="(n, i) in yellows" :key="'y' + i">
              <circle :cx="n[0]" :cy="n[1]" r="3.500" fill="#302000" stroke="#ffee00" stroke-width="1.300" stroke-dasharray="3 1" />
              <circle :cx="n[0]" :cy="n[1]" r="1.200" fill="#ffee00" />
            </g>
            <text x="921" y="306" class="cDim" text-anchor="middle">800</text>
            <text x="745" y="483" class="cDim" text-anchor="middle">800</text>
            <text x="1117" y="479" class="cDim" text-anchor="middle">807</text>
            <text x="940" y="659" class="cDim" text-anchor="middle">905</text>
            <text x="1108" y="266" class="cLabel">全部纵筋</text>
            <text x="1108" y="281" class="cLabel">箍筋</text>
            <text x="1108" y="296" class="cLabel">其它纵筋</text>
            <text x="1173" y="266" class="cVal2">4C22+16C18</text>
            <text x="1173" y="282" class="cVal2">C8@100/200</text>
            <text x="1173" y="297" class="cVal2">2C18</text>
          </svg>
          <div class="dStatus">
            <span class="dsA"><Tx s="(X: 787 Y: 262)" /></span>
            <span class="dsB"><Tx s="请指定起点所在纵筋或网格交点,按右键终止或ESC键取消" /></span>
          </div>
        </div>
      </div>
    </div>
  </div>
</template>

<style scoped>
.app {
  position: relative;
  width: 1366px;
  height: 768px;
  overflow: hidden;
  display: flex;
  flex-direction: column;
  background: #f0f0f0;
  color: #1a1a1a;
  font: 12px/16px "Liberation Sans", "Noto Sans CJK SC", sans-serif;
}

.defs {
  position: absolute;
}

.ic16 {
  width: 16px;
  height: 16px;
  flex: none;
}

.ic16h {
  width: 15px;
  height: 20px;
  flex: none;
}

.drop {
  display: inline-block;
  width: 0;
  height: 0;
  border-left: 3px solid transparent;
  border-right: 3px solid transparent;
  border-top: 4px solid #222;
  flex: none;
}

.drop.grey {
  border-top-color: #888;
}

.more {
  font: 700 12px/14px "Liberation Sans", sans-serif;
  color: #222;
}

.sep {
  width: 1px;
  height: 22px;
  background: #b8b8b8;
  flex: none;
}

/* title bar */
.title {
  height: 24px;
  flex: none;
  display: flex;
  align-items: center;
  background: #fff;
  color: #6e6e6e;
  font-size: 13px;
  white-space: nowrap;
  overflow: hidden;
}

.titleLogo {
  width: 16px;
  height: 16px;
  margin: 0 5px 0 3px;
  flex: none;
}

.titleText {
  width: 680px;
  overflow: hidden;
  flex: none;
}

.winBtns {
  margin-left: auto;
  display: flex;
  align-items: center;
  gap: 36px;
  padding-right: 22px;
}

/* menu */
.menu {
  height: 28px;
  flex: none;
  display: flex;
  align-items: center;
  gap: 10px;
  padding-left: 7px;
  background: #f5f5f5;
  white-space: nowrap;
}

.menuIc {
  display: inline-flex;
  align-items: center;
  gap: 3px;
}

.menuIc .drop {
  margin-left: 8px;
}

.buddy {
  margin-left: -6px;
}

.news {
  width: 185px;
  height: 28px;
  flex: none;
  box-sizing: border-box;
  margin-left: -4px;
  padding-left: 31px;
  line-height: 30px;
  color: #3c6a00;
  background: linear-gradient(#fff, #f0f0f0);
  border-radius: 3px 3px 0 0;
}

.acct {
  margin-left: 1px;
}

.bean {
  margin-left: -2px;
}

.bell {
  width: 14px;
  height: 20px;
  flex: none;
  margin-left: -1px;
}

.menu .more {
  margin-left: 26px;
  margin-top: -8px;
}

/* main toolbars */
.tools {
  height: 30px;
  flex: none;
  display: flex;
  align-items: center;
  gap: 3px;
  position: relative;
}

.strip {
  height: 27px;
  display: flex;
  align-items: center;
  box-sizing: border-box;
  background: linear-gradient(#fafafa, #ececec);
  border-radius: 3px;
  white-space: nowrap;
  flex: none;
}

.stripA {
  width: 150px;
  padding-left: 4px;
  gap: 7px;
}

.stripA .more {
  margin: -8px 3px 0 auto;
}

.stripB {
  width: 549px;
  padding-left: 4px;
  gap: 9px;
}

.stripB .tool {
  gap: 3px;
}

.stripB .first {
  margin-right: -3px;
}

.stripB .sumTool {
  margin-right: -2px;
}

.stripB .more {
  margin: -8px 5px 0 auto;
}

.stripC {
  width: 640px;
  gap: 7px;
}

.stripC .tool {
  gap: 3px;
}

.stripC .tool .drop {
  margin-left: 3px;
}

.farMore {
  position: absolute;
  left: 1348px;
  top: 3px;
}

.tool {
  display: inline-flex;
  align-items: center;
  gap: 4px;
  white-space: nowrap;
}

.tool.off {
  color: #8c8c8c;
}

.sigma {
  font: 700 15px/16px "Liberation Sans", sans-serif;
  width: 12px;
  margin-right: 7px;
  text-align: center;
}

.view2d {
  width: 61px;
  height: 26px;
  margin-right: -3px;
  display: flex;
  align-items: center;
  gap: 5px;
  padding-left: 3px;
  box-sizing: border-box;
  border: 1px solid #707070;
  color: #8c8c8c;
  flex: none;
}

.swatch {
  width: 14px;
  height: 14px;
  background: #e4e4e4;
  border: 1px solid #c8c8c8;
}

.view2d .drop {
  margin-left: 4px;
}

/* work area */
.work {
  flex: 1;
  min-height: 0;
  margin-top: 2px;
  display: flex;
  overflow: hidden;
}

.nav {
  width: 167px;
  flex: none;
  display: flex;
  flex-direction: column;
}

.navHead {
  height: 15px;
  flex: none;
  margin-bottom: 1px;
  border: 1px solid #8a8a8a;
  box-sizing: border-box;
  display: flex;
  align-items: center;
  font-size: 12.5px;
  padding-left: 1px;
  gap: 8px;
  width: 166px;
}

.navHead span {
  flex: 1;
}

.navHead svg {
  margin-right: 2px;
}

.navBtn {
  height: 22px;
  flex: none;
  margin: 0 1px 1px 2px;
  width: 164px;
  padding: 0;
  font: 13px/20px "Liberation Sans", "Noto Sans CJK SC", sans-serif;
  color: #1a1a1a;
  background: #f0f0f0;
  border: 1px solid #a8a8a8;
  border-top-color: #d8d8d8;
  border-left-color: #d8d8d8;
}

.plusMinus {
  height: 27px;
  flex: none;
  margin: 0 1px 0 3px;
  width: 163px;
  padding: 6px 0 0 5px;
  box-sizing: border-box;
  display: flex;
  gap: 5px;
  background: linear-gradient(#fbfbfb, #efefef);
}

.treeBox {
  height: 487px;
  flex: none;
  width: 162px;
  margin: 0 0 2px 3px;
  box-sizing: border-box;
  border: 1px solid #808080;
  border-bottom-width: 2px;
  background: #fff;
  display: flex;
  overflow: hidden;
}

.treeRows {
  flex: 1;
  padding-top: 1px;
  overflow: hidden;
}

.tRow {
  position: relative;
  height: 16px;
  display: flex;
  align-items: center;
  padding-left: 7px;
  white-space: nowrap;
}

.chev {
  flex: none;
  margin-right: 7px;
}

.tHead {
  margin-left: 6px;
  font-size: 12px;
}

.tRow.child {
  padding-left: 42px;
}

.tRow.child::before,
.tRow.child::after {
  content: "";
  position: absolute;
  top: 0;
  bottom: 0;
  border-left: 1px dotted #777;
}

.tRow.child::before {
  left: 12px;
}

.tRow.child::after {
  left: 31px;
}

.tRow.child.last::after {
  bottom: 8px;
}

.hl {
  position: absolute;
  top: 8px;
  border-top: 1px dotted #777;
}

.tRow .hl {
  left: 32px;
  width: 10px;
}

.tLabel {
  display: inline-flex;
  align-items: center;
  height: 16px;
  padding-right: 3px;
}

.tLabel.picked {
  background: #d3d3d3;
  margin-left: -3px;
  padding-left: 3px;
}

.tTxt {
  margin-left: 4px;
}

.sb {
  position: relative;
  width: 15px;
  flex: none;
  background: #f0f0f0;
  margin-right: 3px;
}

.arrow {
  position: absolute;
  left: 2px;
  top: 3px;
}

.arrow.bottom {
  top: auto;
  bottom: 3px;
}

.thumb {
  position: absolute;
  left: 0;
  right: 0;
  background: #cdcdcd;
}

.navThumb {
  top: 18px;
  height: 276px;
}

.partThumb {
  top: 294px;
  height: 248px;
}

.propThumb {
  top: 17px;
  height: 310px;
}

.center {
  flex: 1;
  min-width: 0;
  display: flex;
  flex-direction: column;
}

.listBar {
  height: 28px;
  flex: none;
  display: flex;
  align-items: center;
  gap: 7px;
  padding: 0 0 2px 4px;
  box-sizing: border-box;
  background: linear-gradient(#fafafa, #ececec);
  white-space: nowrap;
  margin-left: 1px;
}

.listBar .tool {
  font-size: 12px;
}

.floorLabel {
  margin-left: -4px;
}

.floorCombo {
  width: 66px;
  height: 26px;
  flex: none;
  display: flex;
  align-items: center;
  justify-content: space-between;
  padding: 0 8px 0 2px;
  box-sizing: border-box;
  background: #fafafa;
  margin-left: -2px;
  margin-right: -10px;
}

.panes {
  flex: 1;
  min-height: 0;
  display: flex;
}

.parts {
  width: 185px;
  flex: none;
  display: flex;
  flex-direction: column;
  margin-left: 1px;
}

.search {
  height: 31px;
  flex: none;
  display: flex;
  align-items: center;
  gap: 6px;
  padding-top: 5px;
  box-sizing: border-box;
  background: #fff;
  margin-right: 2px;
}

.searchBox {
  width: 156px;
  height: 24px;
  box-sizing: border-box;
  border: 1px solid #8a8a8a;
  padding: 3px 2px;
  color: #8a8a8a;
  font-size: 12.5px;
  background: #fff;
}

.partList {
  flex: 1;
  min-height: 0;
  display: flex;
  border: 1px solid #808080;
  border-bottom-width: 2px;
  border-right-width: 2px;
  background: #fff;
  overflow: hidden;
}

.partRows {
  flex: 1;
}

.pRow {
  position: relative;
  height: 16px;
  white-space: nowrap;
  padding-left: 40px;
}

.pRow::before {
  content: "";
  position: absolute;
  left: 31px;
  top: 0;
  bottom: 0;
  border-left: 1px dotted #777;
}

.pRow.lastP::before {
  bottom: 8px;
}

.pRow .hl {
  left: 32px;
  width: 12px;
}

.pLabel {
  position: relative;
  display: inline-flex;
  align-items: center;
  height: 16px;
  width: 57px;
  padding-left: 4px;
  box-sizing: border-box;
}

.pLabel.cur {
  background: #2f6ec8;
  color: #0c1c3c;
}

.gear {
  width: 12px;
  height: 12px;
  flex: none;
  margin-right: 7px;
}

.propPane {
  flex: 1;
  min-width: 0;
  margin-left: 7px;
  display: flex;
  flex-direction: column;
}

.propTabs {
  height: 21px;
  flex: none;
  display: flex;
  background: #f9f9f9;
  border-bottom: 1px solid #c8c8c8;
  padding-top: 1px;
  box-sizing: border-box;
}

.propTab {
  width: 58px;
  background: #fff;
  border-right: 1px solid #c8c8c8;
  border-top: 1px solid #dcdcdc;
  text-align: center;
  font-size: 12.5px;
  line-height: 18px;
}

.propBody {
  flex: 1;
  min-height: 0;
  display: flex;
  margin: 4px 6px 6px 0;
  border: 1px solid #9a9a9a;
  border-bottom-width: 0;
  background: #fff;
  overflow: hidden;
}

.propTable {
  flex: 1;
  min-width: 0;
  overflow: hidden;
}

.pHead,
.pLine {
  display: flex;
  height: 19px;
  box-sizing: border-box;
  border-bottom: 1px solid #c0c0c0;
  white-space: nowrap;
}

.pHead {
  height: 22px;
}

.cNo {
  width: 20px;
  flex: none;
  text-align: center;
  background: linear-gradient(#fafafa, #e8e8e8);
  border-right: 1px solid #c0c0c0;
  line-height: 21px;
}

.cName {
  position: relative;
  width: 191px;
  flex: none;
  padding-left: 20px;
  box-sizing: border-box;
  border-right: 1px solid #c0c0c0;
  line-height: 22px;
  overflow: hidden;
}

.cVal {
  flex: 1;
  padding-left: 3px;
  line-height: 22px;
  overflow: hidden;
}

.pHead .cName {
  padding: 0;
  text-align: center;
  background: linear-gradient(#fafafa, #e8e8e8);
  line-height: 24px;
  font-size: 12.5px;
}

.pHead .cVal {
  padding: 0 0 0 44px;
  color: #7a0c90;
  background: linear-gradient(#fbe0aa, #f2c062);
  line-height: 24px;
  font-size: 12.5px;
}

.pLine.sel .cNo {
  background: #fdd28e;
  color: #7a2a00;
}

.pLine.sel .cName {
  background: #0078d7;
  color: #fff;
}

.pLine.sel .cVal {
  background: #d8e9f8;
}

.cName.b {
  color: #0000f0;
}

.cName.g {
  color: #888;
}

.cVal.vg {
  color: #8a8a8a;
}

.cName.sub {
  padding-left: 30px;
}

.cName.sub::before,
.cName.sub::after {
  content: "";
  position: absolute;
  background: #c0c0c0;
}

.cName.sub::before {
  left: 9px;
  top: 0;
  bottom: 0;
  width: 1px;
}

.cName.sub::after {
  left: 10px;
  top: 9px;
  width: 16px;
  height: 1px;
}

.cName.sub.end::before {
  bottom: 9px;
}

.pm {
  position: absolute;
  left: 4px;
  top: 3px;
  width: 11px;
  height: 11px;
  border: 1px solid #b0b0b0;
  font: 400 12px/10px "Liberation Sans", sans-serif;
  color: #222;
  text-align: center;
  background: #fff;
}

.propSb {
  margin-right: 0;
  border-left: 1px solid #c0c0c0;
}

/* status bar */
.status {
  height: 20px;
  flex: none;
  display: flex;
  gap: 2px;
  background: #f0f0f0;
}

.st {
  flex: none;
  box-sizing: border-box;
  padding-left: 2px;
  border: 1px solid #dadada;
  line-height: 18px;
  white-space: nowrap;
  overflow: hidden;
}

.w1 { width: 148px; }
.w2 { width: 78px; }
.w3 { width: 97px; }
.w4 { width: 48px; }
.w5 { width: 915px; }
.w6 { width: 70px; }

/* taskbar */
.taskbar {
  height: 40px;
  flex: none;
  display: flex;
  align-items: center;
  background: #061118;
}

.startBtn {
  width: 48px;
  height: 40px;
  flex: none;
  display: flex;
  align-items: center;
  justify-content: center;
  background: #000;
}

.cortana {
  width: 344px;
  height: 40px;
  flex: none;
  display: flex;
  align-items: center;
  background: #333;
  color: #8e8e8e;
  font-size: 14px;
  padding-left: 10px;
  box-sizing: border-box;
}

.ring {
  width: 14px;
  height: 14px;
  border: 3px solid #e4e4e4;
  border-radius: 50%;
  margin-right: 6px;
  flex: none;
}

.mic {
  margin-left: auto;
  margin-right: 14px;
}

.taskView {
  width: 48px;
  display: flex;
  justify-content: center;
  flex: none;
}

.tApp {
  position: relative;
  width: 50px;
  height: 40px;
  flex: none;
  display: flex;
  align-items: center;
  justify-content: center;
}

.tApp.run::after {
  content: "";
  position: absolute;
  left: 3px;
  right: 3px;
  bottom: 0;
  height: 3px;
  background: #76b9ed;
}

.tApp.active {
  background: #3a484e;
}

.tApp.active::after {
  left: 0;
  right: 0;
}

.tray {
  flex: 1;
  display: flex;
  align-items: center;
  gap: 10px;
  padding-left: 85px;
  color: #eee;
  white-space: nowrap;
}

.link {
  color: #c8c8c8;
}

.volIc {
  margin-left: -3px;
}

.ime {
  font-size: 13px;
}

.sogouMini {
  width: 14px;
  height: 15px;
  margin-left: 6px;
  border-radius: 3px;
  background: #ef4a23;
  color: #fff;
  font: 700 13px/15px "Liberation Sans", sans-serif;
  text-align: center;
  transform: skewX(-6deg);
}

.clock {
  margin-left: 8px;
  display: flex;
  flex-direction: column;
  align-items: center;
  gap: 3px;
  font-size: 12.5px;
  line-height: 16px;
  color: #e8e8e8;
  width: 59px;
}

.notice {
  position: relative;
  margin-left: 9px;
  display: flex;
}

.badge {
  position: absolute;
  left: 7px;
  top: 7px;
  width: 16px;
  height: 16px;
  border-radius: 50%;
  background: #3c3c3c;
  color: #fff;
  font: 700 11px/16px "Liberation Sans", sans-serif;
  text-align: center;
}

/* floating bits over the title bar */
.ball {
  position: absolute;
  left: 1075px;
  top: -28px;
  width: 46px;
  height: 46px;
  box-sizing: border-box;
  border-radius: 50%;
  border: 2px solid #8a8a8a;
  background: radial-gradient(circle at 50% 40%, #7edb6e, #3db548);
  color: #fff;
  font: 700 12px/16px "Liberation Sans", sans-serif;
  display: flex;
  align-items: flex-end;
  justify-content: center;
  padding-bottom: 5px;
  box-shadow: 0 2px 4px rgba(0, 0, 0, 0.3);
}

.imeBar {
  position: absolute;
  left: 720px;
  top: 4px;
  width: 186px;
  height: 23px;
  box-sizing: border-box;
  border: 1px solid #b8cfe4;
  background: #fff;
  display: flex;
  align-items: center;
  gap: 7px;
  padding-left: 14px;
}

.sLogo {
  position: absolute;
  left: -19px;
  top: -1px;
  width: 24px;
  height: 24px;
  border-radius: 4px;
  background: #ef4a23;
  color: #fff;
  font: 700 21px/24px "Liberation Sans", sans-serif;
  text-align: center;
  transform: skewX(-6deg);
}

.ying {
  color: #2e78c8;
  font-weight: 700;
  font-size: 14px;
}

.dot {
  color: #2e78c8;
  font: 700 12px/12px "Liberation Sans", sans-serif;
  margin-left: 7px;
}

/* section dialog */
.dialog {
  position: absolute;
  left: 655px;
  top: 84px;
  width: 685px;
  height: 619px;
  box-sizing: border-box;
  padding: 0 7px 7px 6px;
  background: linear-gradient(#9bb4d1, #b9d1ea 30px);
  border-right: 1px solid #222;
  border-bottom: 1px solid #4a7a9a;
  border-left: 1px solid #9bb4d1;
  display: flex;
  flex-direction: column;
  z-index: 2;
}

.dlgTitle {
  height: 29px;
  flex: none;
  line-height: 37px;
  color: #1a1a1a;
  font-size: 12px;
}

.dlgClient {
  flex: 1;
  min-height: 0;
  display: flex;
  flex-direction: column;
}

.dlgTabs {
  height: 21px;
  flex: none;
  display: flex;
  align-items: flex-end;
  background: #f0f0f0;
  position: relative;
  border-bottom: 1px solid #d0d0d0;
  box-sizing: border-box;
}

.dTab {
  width: 47px;
  height: 19px;
  line-height: 19px;
  padding-left: 7px;
  box-sizing: border-box;
  border: 1px solid #d0d0d0;
  border-bottom: none;
  background: #f0f0f0;
}

.dTab.on {
  width: 51px;
  height: 22px;
  background: #fff;
  line-height: 20px;
  margin-bottom: -1px;
  margin-top: -2px;
}

.dlgBody {
  flex: 1;
  min-height: 0;
  display: flex;
  flex-direction: column;
  padding: 3px 4px 1px 5px;
  background: #f0f0f0;
  gap: 3px;
}

.dBar {
  height: 25px;
  flex: none;
  display: flex;
  align-items: center;
  gap: 10px;
  padding-left: 12px;
  background: linear-gradient(#fafafa, #eeeeee);
  border-radius: 2px;
  box-sizing: border-box;
}

.dBar .sep {
  margin: 0 -2px;
}

.dBtn {
  white-space: nowrap;
}

.dBtn.chosen {
  margin: 0 -5px;
  padding: 3px 4px;
  height: 24px;
  box-sizing: border-box;
  line-height: 16px;
  border: 1px solid #1b7ad0;
  background: #dceaf6;
}

.dBtn.dim {
  color: #999;
}

.infoBar {
  height: 26px;
  gap: 0;
}

.rebarCombo {
  width: 135px;
  height: 24px;
  box-sizing: border-box;
  border: 1px solid #0b78d7;
  background: #fff;
  display: flex;
  align-items: center;
  justify-content: space-between;
  padding-left: 2px;
  font-size: 13px;
}

.rebarCombo em {
  width: 12px;
  height: 22px;
  background: #dceaf6;
  display: flex;
  align-items: center;
  justify-content: center;
}

.arcDrop {
  margin-left: -3px;
}

.smallCombo {
  width: 58px;
  height: 24px;
  box-sizing: border-box;
  border: 1px solid #808080;
  display: flex;
  align-items: center;
  justify-content: flex-end;
  padding-right: 3px;
  margin-left: -5px;
}

.canvas {
  flex: none;
  display: block;
  margin-top: 1px;
  box-sizing: border-box;
  outline: 2px solid #f00;
  outline-offset: -2px;
}

.cDim {
  fill: #fff;
  font: 14px "Liberation Sans", sans-serif;
}

.cLabel {
  fill: #fff;
  font: 14.500px "Noto Sans CJK SC", sans-serif;
}

.cVal2 {
  fill: #22ee22;
  font: 13.500px "Liberation Sans", sans-serif;
}

.cZero {
  fill: #555;
  font: 13px "Liberation Sans", sans-serif;
}

.dStatus {
  height: 24px;
  flex: none;
  display: flex;
  gap: 2px;
}

.dsA,
.dsB {
  box-sizing: border-box;
  border: 1px solid #dcdcdc;
  line-height: 21px;
  white-space: nowrap;
  overflow: hidden;
  background: #f4f4f4;
}

.dsA {
  width: 148px;
  padding-left: 6px;
}

.dsB {
  flex: 1;
  padding-left: 3px;
}
</style>

<style>
body {
  background: #f0f0f0;
}

.lat {
  font-family: "Liberation Mono", monospace;
  letter-spacing: -1.2px;
}
</style>
